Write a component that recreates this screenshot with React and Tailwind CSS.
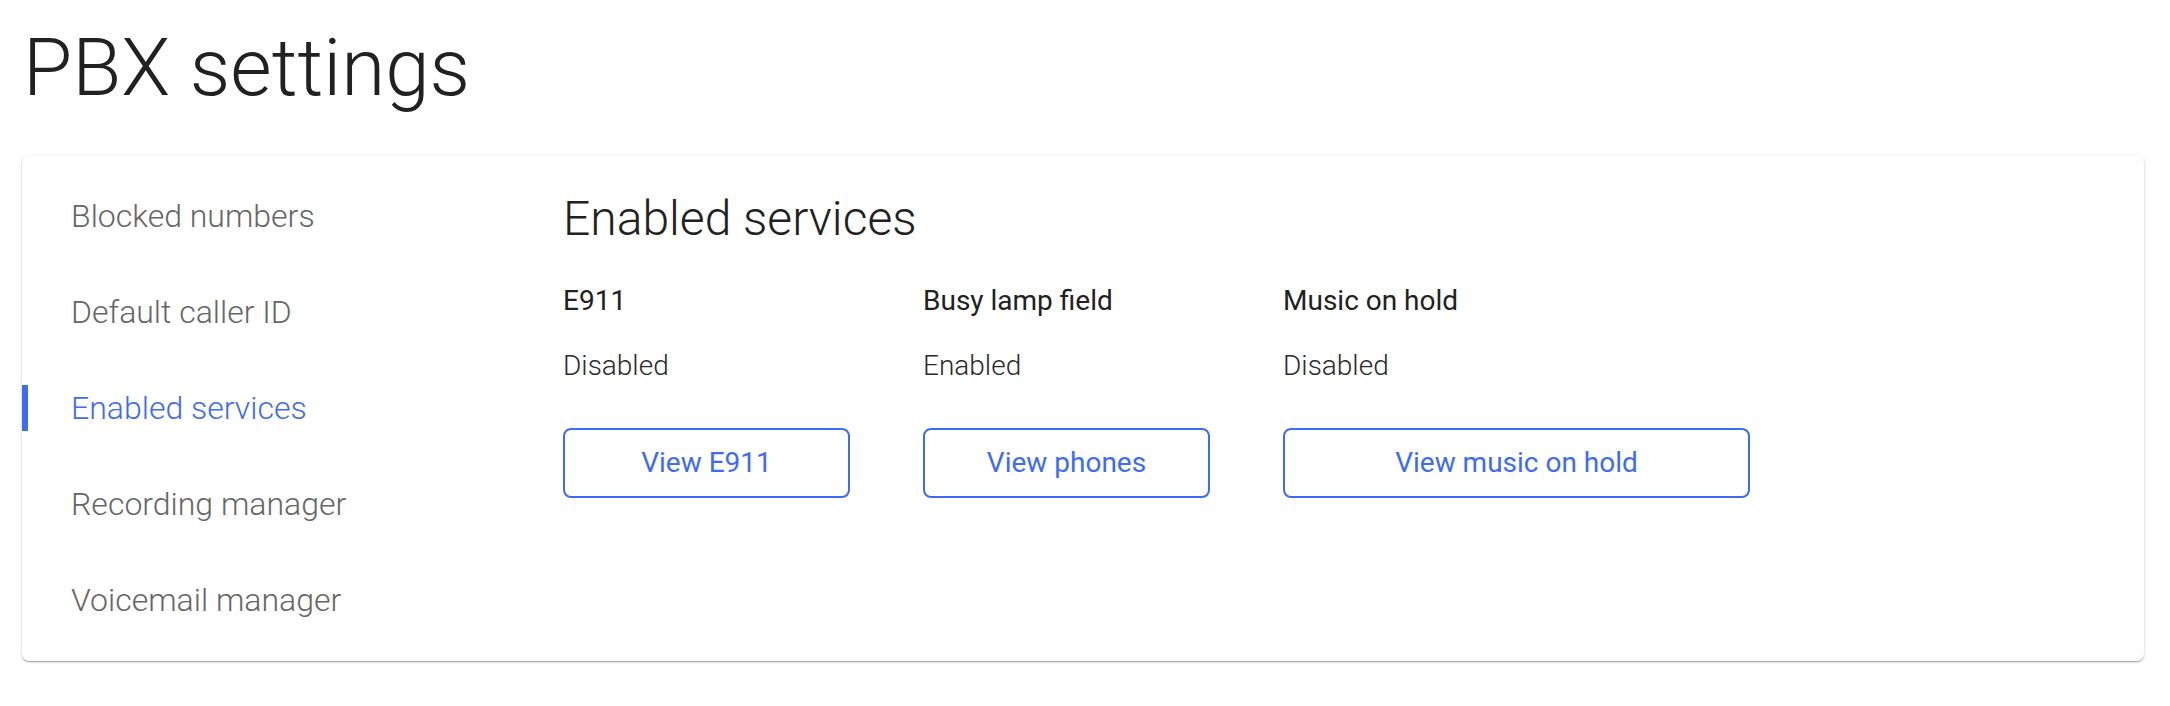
import { useState } from 'react';

const navItems = [
  'Blocked numbers',
  'Default caller ID',
  'Enabled services',
  'Recording manager',
  'Voicemail manager',
];

const services = [
  { name: 'E911', status: 'Disabled', action: 'View E911', width: 'w-[287px]' },
  { name: 'Busy lamp field', status: 'Enabled', action: 'View phones', width: 'w-[287px]' },
  { name: 'Music on hold', status: 'Disabled', action: 'View music on hold', width: 'w-[467px]' },
];

export default function App() {
  const [active, setActive] = useState('Enabled services');

  return (
    <div className="min-h-screen bg-white font-['Roboto',sans-serif] pt-[20px] pl-[22px] pr-[26px]">
      {/* Header */}
      <h1 className="text-[80px] leading-[96px] font-light text-[#212121] ml-[1px]">PBX settings</h1>

      {/* Card */}
      <div className="mt-[39px] bg-white rounded-[7px] shadow-[0_1px_3px_rgba(0,0,0,0.2),0_1px_1px_rgba(0,0,0,0.14),0_2px_1px_-1px_rgba(0,0,0,0.12)] flex py-[37px]">
        {/* Side nav */}
        <nav className="w-[541px] shrink-0 flex flex-col gap-[48px]">
          {navItems.map((item) => (
            <button
              key={item}
              onClick={() => setActive(item)}
              className="relative h-[48px] text-left pl-[49px] text-[32px] leading-[48px] font-light"
            >
              {active === item && (
                <span className="absolute left-0 top-[1px] h-[46px] w-[6px] bg-[#3d6bf5]" />
              )}
              <span className={active === item ? 'text-[#3d6bf5]' : 'text-[#666666]'}>{item}</span>
            </button>
          ))}
        </nav>

        {/* Content */}
        <div className="flex-1">
          <h2 className="text-[48px] leading-[56px] font-light text-[#212121] -mt-[1px]">Enabled services</h2>
          <div className="flex mt-[34px]">
            {services.map((s) => (
              <div key={s.name} className="w-[360px] shrink-0 flex flex-col">
                <div className="text-[28px] leading-[40px] text-[#212121]">{s.name}</div>
                <div className="mt-[25px] text-[28px] leading-[40px] font-light text-[#2a2a2a]">{s.status}</div>
                <button
                  className={`mt-[42px] h-[70px] ${s.width} rounded-[8px] border-2 border-[#3d6bf5] text-[#3d6bf5] text-[28px] font-normal`}
                >
                  {s.action}
                </button>
              </div>
            ))}
          </div>
        </div>
      </div>
    </div>
  );
}
